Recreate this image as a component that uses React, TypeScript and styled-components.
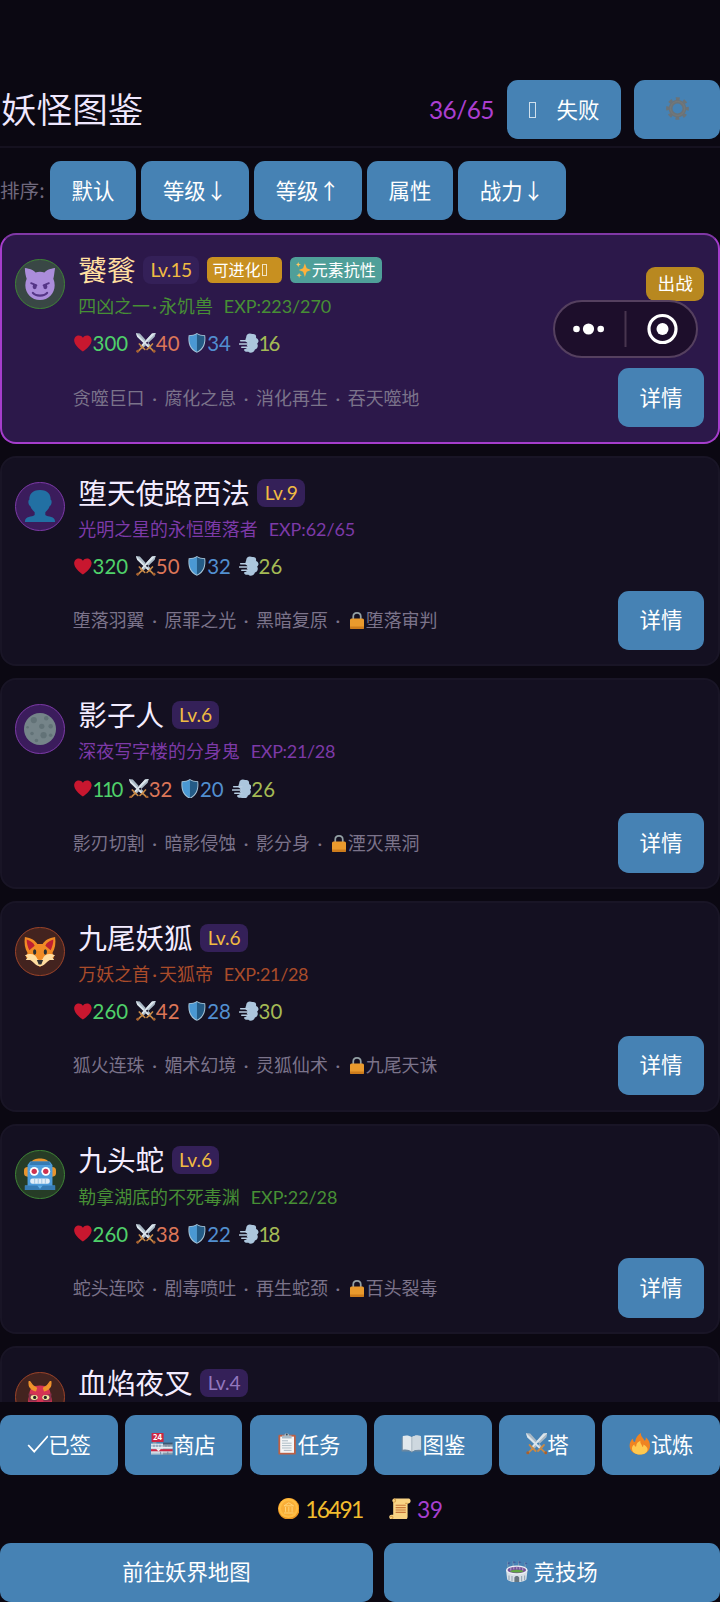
import React from 'react';
import styled, { createGlobalStyle, css } from 'styled-components';

const GlobalStyle = createGlobalStyle`
  * { box-sizing: border-box; }
  body { margin: 0; background: #0b0812; }
  button { font: inherit; }
`;

const Screen = styled.div`
  position: relative;
  width: 720px;
  height: 1602px;
  overflow: hidden;
  display: flex;
  flex-direction: column;
  background: #0b0812;
  color: #f0e8ff;
  font-family: Lato, 'Noto Sans CJK SC', sans-serif;
  font-size: 21.6px;
  font-weight: 400;
  white-space: nowrap;
`;

const Header = styled.header`
  flex: none;
  display: flex;
  align-items: center;
  margin-top: 80.4px;
  height: 67.6px;
  padding-bottom: 7px;
  border-bottom: 2px solid #15111f;
`;

const Title = styled.h1`
  margin: 0;
  flex: 1;
  padding: 0 0 3px 1px;
  font-family: 'Noto Sans CJK SC', sans-serif;
  font-size: 35.6px;
  font-weight: 350;
  line-height: 56px;
`;

const Count = styled.span`
  margin-right: 13px;
  font-size: 24.4px;
  letter-spacing: -0.5px;
  color: #ab3fd0;
`;

const Button = styled.button<{ $grow?: boolean; $gap?: number }>`
  flex: ${(p) => (p.$grow ? '1 0 auto' : 'none')};
  display: flex;
  align-items: center;
  justify-content: center;
  gap: ${(p) => p.$gap ?? 0}px;
  height: 59.4px;
  padding: 0 21.6px 2px;
  border: 0;
  border-radius: 10.8px;
  background: #4682b4;
  color: #fff;
  font-family: 'Noto Sans CJK SC', sans-serif;
  font-size: 21.4px;
  line-height: 30px;
`;

const HeaderButton = styled(Button)<{ $width: number }>`
  width: ${(p) => p.$width}px;
  padding: 0 0 2px;
  margin-right: ${(p) => (p.$width > 100 ? 13 : 0)}px;
`;

const MissingGlyph = styled.span<{ $small?: boolean }>`
  display: inline-block;
  border: 1px solid rgba(255, 255, 255, 0.75);
  width: ${(p) => (p.$small ? 5 : 7)}px;
  height: ${(p) => (p.$small ? 12 : 16)}px;
  margin-top: ${(p) => (p.$small ? 0 : 2)}px;
  margin-left: ${(p) => (p.$small ? 1 : 0)}px;
  margin-right: ${(p) => (p.$small ? 9.5 : 0)}px;
`;

const SortBar = styled.nav`
  flex: none;
  display: flex;
  align-items: center;
  gap: 5.4px;
  margin-top: 13px;
`;

const SortLabel = styled.span`
  width: 44.6px;
  padding-bottom: 2px;
  font-family: 'Noto Sans CJK SC', sans-serif;
  font-size: 19.6px;
  color: #70697d;
`;

const List = styled.main`
  flex: 1;
  min-height: 0;
  overflow: hidden;
  margin-top: 12.8px;
  display: flex;
  flex-direction: column;
  gap: 12px;
`;

const Card = styled.article<{ $active?: boolean }>`
  position: relative;
  flex: none;
  display: flex;
  height: 210.6px;
  padding: 14px;
  border: 2px solid #191526;
  border-radius: 16px;
  background: #141021;
  ${(p) =>
    p.$active &&
    css`
      border-color: #8038a6 #a53dcc #a53dcc;
      background: #2c184a;
    `}
`;

const Avatar = styled.div<{ $ring: string; $fill: string }>`
  flex: none;
  display: flex;
  align-items: center;
  justify-content: center;
  width: 49.4px;
  height: 49.4px;
  margin: 10px 0 0 -0.6px;
  border: 1.8px solid ${(p) => p.$ring};
  border-radius: 50%;
  background: ${(p) => p.$fill};
`;

const Body = styled.div`
  flex: 1;
  margin-left: 8px;
`;

const NameRow = styled.div`
  display: flex;
  align-items: center;
  gap: 7.6px;
  height: 32px;
  margin: 4.8px 0 0 5.5px;
`;

const Name = styled.h2<{ $gold?: boolean }>`
  margin: 0;
  font-size: 28.6px;
  font-weight: 400;
  line-height: 32px;
  color: ${(p) => (p.$gold ? '#ffdfa0' : '#f3ecff')};
`;

const Level = styled.span<{ $dim?: boolean; $track: number }>`
  height: 28px;
  padding: 0 7.4px;
  border-radius: 8px;
  background: #342058;
  color: ${(p) => (p.$dim ? '#9277be' : '#f0bb42')};
  font-size: 19.2px;
  line-height: 28px;
  letter-spacing: ${(p) => p.$track}px;
`;

const Tag = styled.span<{ $bg: string }>`
  display: flex;
  align-items: center;
  height: 26px;
  padding: 0 6px;
  border-radius: 5.4px;
  background: ${(p) => p.$bg};
  color: #fff;
  font-size: 16px;
  line-height: 26px;
`;

const Desc = styled.div<{ $color: string }>`
  height: 24px;
  margin: 8.2px 0 0 5.5px;
  color: ${(p) => p.$color};
  font-size: 17.95px;
  line-height: 24px;
`;

const Dot = styled.span<{ $wide?: boolean }>`
  display: inline-block;
  width: ${(p) => (p.$wide ? 19.9 : 9)}px;
  text-align: center;
`;

const Exp = styled.span<{ $ones: number }>`
  margin-left: 11px;
  letter-spacing: ${(p) => -0.05 - p.$ones * 0.25}px;
`;

const Stats = styled.div`
  display: flex;
  align-items: center;
  gap: 7.8px;
  height: 24px;
  margin-top: 13.2px;
`;

const Stat = styled.span<{ $color: string; $track: number }>`
  display: flex;
  align-items: center;
  color: ${(p) => p.$color};
  font-size: 20.4px;
  line-height: 24px;
  letter-spacing: ${(p) => p.$track}px;
`;

const SkillRow = styled.div`
  display: flex;
  align-items: center;
  justify-content: space-between;
  margin-top: 12.6px;
`;

const Skills = styled.div`
  display: flex;
  align-items: center;
  color: #7b738a;
  font-size: 17.95px;
  line-height: 24px;
`;

const Badge = styled.span`
  position: absolute;
  top: 32px;
  right: 14px;
  width: 57.6px;
  height: 34px;
  border-radius: 9px;
  background: #b88820;
  color: #fff;
  font-size: 17.6px;
  line-height: 33px;
  text-align: center;
`;

const Capsule = styled.div`
  position: absolute;
  top: 300px;
  left: 553px;
  width: 145px;
  height: 58px;
  display: flex;
  align-items: center;
  border: 2px solid #55405f;
  border-radius: 29px;
  background: #1d0e2b;
`;

const Footer = styled.footer`
  flex: none;
  padding-top: 13px;
`;

const Tabs = styled.div`
  display: flex;
  gap: 7.2px;
`;

const Wallet = styled.div`
  display: flex;
  align-items: center;
  justify-content: center;
  gap: 27px;
  height: 68px;
`;

const Money = styled.span<{ $color: string; $track: number }>`
  display: flex;
  align-items: center;
  gap: 6px;
  color: ${(p) => p.$color};
  font-size: 22.8px;
  letter-spacing: ${(p) => p.$track}px;
`;

const Actions = styled.div`
  display: flex;
  gap: 10.8px;
`;

const Art = styled.svg`
  display: block;
  flex: none;
`;

const drawings: Record<string, React.ReactNode> = {
  heart: (
    <path fill="#c8172f" d="M35 12.3C35 7 30.8 3 26 3c-3.3 0-6.200 1.600-8 4.100C16.200 4.600 13.300 3 10 3 5.200 3 1 7 1 12.300c0 8 9.500 17.500 17 21.700 7.500-4.200 17-13.700 17-21.700z" />
  ),
  swords: (
    <>
      <path d="M0 0l7 1 21 23-4 4L2 7zM36 0l-7 1L8 24l4 4L34 7z" fill="#a9b8c4" />
      <path d="M0 0l26 26-2 2L2 7zM36 0L10 26l-2-2L29 1z" fill="#dbe5ec" />
      <path d="M20 30l10-10M25 26l8 8M16 30L6 20M11 26l-8 8" stroke="#c88945" strokeWidth="3" strokeLinecap="round" />
      <circle cx="33" cy="33" r="2.500" fill="#a76030" />
      <circle cx="3" cy="33" r="2.500" fill="#a76030" />
    </>
  ),
  shield: (
    <>
      <path fill="#a8c5d8" d="M18 0c4 3 9 4 15 4 2 14-2 27-15 32C5 31 1 18 3 4c6 0 11-1 15-4z" />
      <path fill="#4a98d3" d="M18 2v32C7 29 3 18 4.500 5.500 10 5.500 15 4 18 2z" />
      <path fill="#245b86" d="M18 2v32c11-5 15-16 13.500-28.500C26 5.500 21 4 18 2z" />
    </>
  ),
  wind: (
    <>
      <path fill="#acc6dd" d="M13 8c0-6 6-9 11-6 5-1 8 2 7 7 5 2 6 7 2 10 3 5 0 10-4 11-2 6-9 8-12 4-4 1-8-1-8-4 3-1 6-2 7-5l-2-2c2-2 2-4 0-6-3-1-3-5-1-9z" />
      <path d="M3 14h15M1 20h16M5 26h13" stroke="#b6cce1" strokeWidth="2.600" strokeLinecap="round" />
    </>
  ),
  lock: (
    <>
      <path d="M10.500 18v-7c0-10 15-10 15 0v7" fill="none" stroke="#93a0a4" strokeWidth="3.500" />
      <rect x="4" y="15" width="28" height="21" rx="3" fill="#e99a2d" />
      <path d="M4 31h28v2a3 3 0 01-3 3H7a3 3 0 01-3-3z" fill="#cd7c1c" />
    </>
  ),
  sparkles: (
    <>
      <path d="M20 3l4 11 10 4-10 4-4 12-4-12-10-4 10-4z" fill="#ffb13b" />
      <path d="M5 0l1.500 4L11 6 6.500 7.500 5 12 3.500 7.500 0 6l3.500-2zM7 24l1.500 4 4.500 2-4.500 1.500L7 36l-1.500-4.500L1 30l4.500-2z" fill="#ffc860" />
    </>
  ),
  devil: (
    <>
      <path fill="#ab8ddb" d="M1 0c6 1 9 2 12 5a17 17 0 0110 0c3-3 6-4 12-5-1 5-1 9-2 12 5 12-3 24-15 24S-2 24 3 12C2 9 1 5 1 0z" />
      <g stroke="#553687" strokeLinecap="round" fill="none">
        <path d="M8 17l6 2.500M28 17l-6 2.500" strokeWidth="2" />
        <path d="M10 28c3 4 13 4 16 0" strokeWidth="2.500" />
      </g>
      <ellipse cx="12" cy="21" rx="2.300" ry="2.800" fill="#553687" />
      <ellipse cx="24" cy="21" rx="2.300" ry="2.800" fill="#553687" />
    </>
  ),
  bust: (
    <path fill="#2270a3" d="M18 0c9 0 12 5 12 11 2 1 1 6-1 7-1 3-3 5-5 7v3c3 3 11 0 11 8H1c0-8 8-5 11-8v-3c-2-2-4-4-5-7-2-1-3-6-1-7C6 5 9 0 18 0z" />
  ),
  moon: (
    <>
      <circle cx="18" cy="18" r="18" fill="#758489" />
      <g fill="#627277">
        <circle cx="11" cy="8" r="3.500" /><circle cx="25" cy="6" r="2.500" /><circle cx="20" cy="15" r="3" />
        <circle cx="30" cy="15" r="2.500" /><circle cx="9" cy="23" r="2" /><circle cx="22" cy="25" r="3.500" />
        <circle cx="30" cy="25" r="2" /><circle cx="14" cy="31" r="2" /><circle cx="4" cy="16" r="1.500" />
      </g>
    </>
  ),
  fox: (
    <>
      <path fill="#f18b25" d="M1 1c7 1 12 4 14 8h6c2-4 7-7 14-8 1 7 0 13-3 18l2 5-9 5-7 6-7-6-9-5 2-5C1 14 0 8 1 1z" />
      <path fill="#bd2032" d="M3 4c5 2 8 4 9 7l-6 5C4 12 3 8 3 4zM33 4c-5 2-8 4-9 7l6 5c2-4 3-8 3-12z" />
      <path fill="#ffdda0" d="M1 22c6-3 12-2 14 4l3 2 3-2c2-6 8-7 14-4l-3 2 2 3h-5c-4 2-6 7-11 7s-7-5-11-7H2l2-3z" />
      <ellipse cx="12" cy="18" rx="1.800" ry="3" fill="#292f33" />
      <ellipse cx="24" cy="18" rx="1.800" ry="3" fill="#292f33" />
      <path d="M14.500 27h7l-2 5h-3z" fill="#333" />
    </>
  ),
  robot: (
    <>
      <path d="M8 5c2-6 18-6 20 0z" fill="#e9952d" />
      <rect x="0" y="10" width="36" height="11" rx="4" fill="#e9952d" />
      <path d="M7 4h22l3 4v23h3v5H1v-5h3V8z" fill="#4f9ddb" />
      <path d="M8 4h20l2 4H6zM1 31h34v5H1z" fill="#367bb3" />
      <path d="M15 31h6l-3 4z" fill="#5dade6" />
      <circle cx="11.500" cy="15" r="5" fill="#fff" /><circle cx="24.500" cy="15" r="5" fill="#fff" />
      <circle cx="11.500" cy="15" r="3" fill="#cc3350" /><circle cx="24.500" cy="15" r="3" fill="#cc3350" />
      <rect x="7" y="23" width="22" height="6" rx="2.500" fill="#e3eff8" />
      <path d="M12 23v6M16 23v6M20 23v6M24 23v6" stroke="#9cc4e2" strokeWidth="1" />
    </>
  ),
  ogre: (
    <>
      <path d="M6 16c0-8 4-11 12-11s12 3 12 11c4 11-1 20-12 20S2 27 6 16z" fill="#d43354" />
      <path d="M13 11C7 10 5 5 6 0c2 4 4 6 8 8zM23 11c6-1 8-6 7-11-2 4-4 6-8 8z" fill="#f0932b" stroke="#f0932b" strokeWidth="1.500" strokeLinejoin="round" />
      <path d="M5 14l11 3-2 6H6zM31 14l-11 3 2 6h8z" fill="#87314d" />
      <ellipse cx="11.500" cy="18.500" rx="4" ry="2.800" fill="#f5e8a0" /><ellipse cx="24.500" cy="18.500" rx="4" ry="2.800" fill="#f5e8a0" />
      <circle cx="12" cy="18.500" r="1.800" fill="#222" /><circle cx="24" cy="18.500" r="1.800" fill="#222" />
      <path d="M10 30h16v3H10z" fill="#fff" />
    </>
  ),
  shop: (
    <>
      <path d="M3 14h6v5H3z" fill="#8295a4" />
      <rect x="1" y="0" width="20" height="15" rx="1" fill="#cb2744" />
      <text x="11" y="12" fontSize="13" fontWeight="700" textAnchor="middle" fill="#fff">24</text>
      <path d="M0 18h20v18H0z" fill="#b6c7d5" />
      <path d="M20 17h16v19H20z" fill="#8c9cab" />
      <path d="M0 27h36v4H0z" fill="#cb2744" />
      <path d="M20 16h16v3H20z" fill="#3a5874" />
      <path d="M0 18h20v1.500H0zM0 23h36v3H0zM0 31h36v1.500H0z" fill="#e6eef4" />
      <path d="M5 19.500v4M10 19.500v4M15 19.500v4M25 19v4M30 19v4M16 31v5M28 31v5" stroke="#6f86a0" strokeWidth="1.500" />
      <path d="M8 26h9l-4.500 5z" fill="#eee" />
    </>
  ),
  clipboard: (
    <>
      <rect x="4" y="3" width="29" height="33" rx="2" fill="#bd6045" />
      <rect x="7" y="6" width="23" height="27" fill="#f4f6f7" />
      <path d="M10 4h4c0-5 8-5 8 0h4v5H10z" fill="#a9bac6" />
      <circle cx="18" cy="2.500" r="1.600" fill="#364a5a" />
      <path d="M10 13h10M10 17h16M10 21h16M10 25h16M13 29h13" stroke="#a5b4c0" strokeWidth="1.500" />
    </>
  ),
  book: (
    <>
      <path d="M1 8l3-2h28l3 2v23H21l-3 2-3-2H1z" fill="#6a87a0" />
      <path d="M3 5c6-2 11-1 15 2 4-3 9-4 15-2v23c-6-1-11 0-15 3-4-3-9-4-15-3z" fill="#e1e8ed" />
      <path d="M18 7c4-3 9-4 15-2v23c-6-1-11 0-15 3z" fill="#ced8df" />
      <path d="M18 7v24" stroke="#8798a5" strokeWidth="1" />
    </>
  ),
  fire: (
    <>
      <path d="M18 36C8 36 1 30 1 21 1 15 4 11 7 9c-1 4 1 6 3 6C11 8 15 3 20 0c-1 6 4 8 6 13 2-1 2-3 2-6 5 4 7 9 7 14 0 9-7 15-17 15z" fill="#ef8322" />
      <path d="M18 36c-8 0-13-4-13-10 0-3 1-6 4-7 0 3 2 4 3 3 0-5 3-7 7-9-1 5 3 6 3 10 2 0 2-2 2-4 4 2 7 5 7 8 0 6-6 9-13 9z" fill="#ffc94f" />
    </>
  ),
  coin: (
    <>
      <circle cx="18" cy="18" r="18" fill="#e89422" />
      <circle cx="17.500" cy="17" r="16.500" fill="#ffbd43" />
      <circle cx="17.500" cy="17" r="12.500" fill="#f9ae38" />
      <path d="M10 13l8-5 8 5zM10 25h16M12.500 15v8M18 15v8M23.500 15v8" stroke="#ffd377" strokeWidth="1.600" fill="none" />
    </>
  ),
  scroll: (
    <>
      <path d="M9 1h24c4 1 4 7 0 8h-2v22c0 4-2 5-5 5H5c-6 0-6-8-1-8h3V7c-3-2-1-6 2-6z" fill="#f9d384" />
      <path d="M7 7c5 1 5-6 1-5M31 9h-4M2 31c5-2 6 3 2 4" fill="none" stroke="#d9a450" strokeWidth="2" />
      <path d="M11 12h17M11 16h17M11 20h17M11 24h17" stroke="#c8773c" strokeWidth="1.800" />
    </>
  ),
  stadium: (
    <>
      <path d="M3 1v10M12 0v8M21 0v8M32 2v9" stroke="#9aa7b5" strokeWidth="1.200" />
      <path d="M3 2l5 1-5 3zM12 0l5 2-5 2zM21 0l5 2-5 2zM32 2l4 2-4 2z" fill="#425c9c" />
      <path d="M0 15h36l-2 16c-5 6-27 6-32 0z" fill="#d7dfe6" />
      <ellipse cx="18" cy="15" rx="18" ry="7.500" fill="#eef2f5" />
      <ellipse cx="18" cy="15" rx="15.500" ry="5.500" fill="#77539a" />
      <path d="M8 11v5M13 10v4M18 10v4M23 10v4M28 11v5" stroke="#cfc2dd" strokeWidth="1.200" />
      <ellipse cx="18" cy="17" rx="11" ry="2.300" fill="#62a841" />
      <path d="M5 24v8M10 25v9M26 25v9M31 24v8" stroke="#9babb9" strokeWidth="2" />
      <path d="M14 36v-8c1-4 7-4 8 0v8z" fill="#66757f" />
    </>
  ),
  check: <path d="M2 20l10 11L35 5" fill="none" stroke="#fff" strokeWidth="3" />,
  gear: (
    <g fill="none" stroke="#6b7378">
      <circle cx="18" cy="18" r="15.500" strokeWidth="4.500" strokeDasharray="6.087 6.087" strokeDashoffset="3.040" />
      <circle cx="18" cy="18" r="10.800" strokeWidth="6" />
      <circle cx="18" cy="18" r="11" strokeWidth="0.800" stroke="#7f7f7a" />
    </g>
  ),
};

const Icon = ({ name, size, width }: { name: string; size: number; width?: number }) => (
  <Art width={width ?? size} height={size} viewBox="0 0 36 36" aria-hidden="true">
    {drawings[name]}
  </Art>
);

type Monster = {
  name: string;
  level: number;
  art: string;
  title: string;
  exp: string;
  color: string;
  ring: string;
  fill: string;
  stats: number[];
  skills: string[];
  locked?: boolean;
  active?: boolean;
};

const purple = { color: '#7d3aa8', ring: '#7d3aa8', fill: '#3b1c5c' };
const green = { color: '#478f35', ring: '#3f8536', fill: '#263c26' };
const orange = { color: '#aa4c2a', ring: '#9d4429', fill: '#43231f' };

const monsters: Monster[] = [
  { name: '饕餮', level: 15, art: 'devil', title: '四凶之一·永饥兽', exp: '223/270', ...green, fill: '#394745', stats: [300, 40, 34, 16], skills: ['贪噬巨口', '腐化之息', '消化再生', '吞天噬地'], active: true },
  { name: '堕天使路西法', level: 9, art: 'bust', title: '光明之星的永恒堕落者', exp: '62/65', ...purple, stats: [320, 50, 32, 26], skills: ['堕落羽翼', '原罪之光', '黑暗复原', '堕落审判'], locked: true },
  { name: '影子人', level: 6, art: 'moon', title: '深夜写字楼的分身鬼', exp: '21/28', ...purple, stats: [110, 32, 20, 26], skills: ['影刃切割', '暗影侵蚀', '影分身', '湮灭黑洞'], locked: true },
  { name: '九尾妖狐', level: 6, art: 'fox', title: '万妖之首·天狐帝', exp: '21/28', ...orange, stats: [260, 42, 28, 30], skills: ['狐火连珠', '媚术幻境', '灵狐仙术', '九尾天诛'], locked: true },
  { name: '九头蛇', level: 6, art: 'robot', title: '勒拿湖底的不死毒渊', exp: '22/28', ...green, stats: [260, 38, 22, 18], skills: ['蛇头连咬', '剧毒喷吐', '再生蛇颈', '百头裂毒'], locked: true },
  { name: '血焰夜叉', level: 4, art: 'ogre', title: '', exp: '', ...orange, stats: [], skills: [] },
];

const statKinds = [
  { icon: 'heart', color: '#4fd06a' },
  { icon: 'swords', color: '#dc7658' },
  { icon: 'shield', color: '#528fd0' },
  { icon: 'wind', color: '#a4ba55' },
];

const ones = (text: string) => text.split('1').length - 1;

// The digit 1 is set tighter than the others.
const tracking = (value: number) => {
  const text = String(value);
  return 0.05 - (ones(text) * 3.6) / text.length;
};

const MonsterCard = ({ m }: { m: Monster }) => (
  <Card $active={m.active}>
    <Avatar $ring={m.ring} $fill={m.fill}>
      <Icon name={m.art} size={32} />
    </Avatar>
    <Body>
      <NameRow>
        <Name $gold={m.active}>{m.name}</Name>
        <Level $dim={m.level < 5} $track={m.level > 9 ? -0.6 : 0}>Lv.{m.level}</Level>
        {m.active && (
          <>
            <Tag $bg="#c89020">可进化<MissingGlyph $small /></Tag>
            <Tag $bg="#4f9f99"><Icon name="sparkles" size={16} />元素抗性</Tag>
          </>
        )}
      </NameRow>
      {m.title && (
        <>
          <Desc $color={m.color}>
            {m.title.split('·').map((part, i) => (
              <React.Fragment key={part}>{i > 0 && <Dot>·</Dot>}{part}</React.Fragment>
            ))}
            <Exp $ones={ones(m.exp)}>EXP:{m.exp}</Exp>
          </Desc>
          <Stats>
            {m.stats.map((value, i) => (
              <Stat key={i} $color={statKinds[i].color} $track={tracking(value)}>
                <Icon name={statKinds[i].icon} size={i === 0 ? 18.5 : 19.8} width={19.8} />
                {value}
              </Stat>
            ))}
          </Stats>
          <SkillRow>
            <Skills>
              {m.skills.map((skill, i) => (
                <React.Fragment key={skill}>
                  {i > 0 && <Dot $wide>·</Dot>}
                  {m.locked && i === 3 && <Icon name="lock" size={18} />}
                  {skill}
                </React.Fragment>
              ))}
            </Skills>
            <Button>详情</Button>
          </SkillRow>
        </>
      )}
    </Body>
    {m.active && <Badge>出战</Badge>}
  </Card>
);

const tabs = [
  ['check', '已签'],
  ['shop', '商店'],
  ['clipboard', '任务'],
  ['book', '图鉴'],
  ['swords', '塔'],
  ['fire', '试炼'],
];

export default function App() {
  return (
    <Screen>
      <GlobalStyle />
      <Header>
        <Title>妖怪图鉴</Title>
        <Count>36/65</Count>
        <HeaderButton $width={114} $gap={21}><MissingGlyph />失败</HeaderButton>
        <HeaderButton $width={86}><Icon name="gear" size={23} /></HeaderButton>
      </Header>
      <SortBar>
        <SortLabel>排序:</SortLabel>
        {['默认', '等级↓', '等级↑', '属性', '战力↓'].map((label) => (
          <Button key={label}>{label}</Button>
        ))}
      </SortBar>
      <List>
        {monsters.map((m) => <MonsterCard key={m.name} m={m} />)}
      </List>
      <Footer>
        <Tabs>
          {tabs.map(([icon, label]) => (
            <Button key={label} $grow><Icon name={icon} size={21.6} />{label}</Button>
          ))}
        </Tabs>
        <Wallet>
          <Money $color="#f2bd2e" $track={-1.8}><Icon name="coin" size={21.6} />16491</Money>
          <Money $color="#a73fcf" $track={-0.6}><Icon name="scroll" size={21.6} />39</Money>
        </Wallet>
        <Actions>
          <Button $grow>前往妖界地图</Button>
          <Button $grow $gap={6}><Icon name="stadium" size={21.6} />竞技场</Button>
        </Actions>
      </Footer>
      <Capsule>
        <Art width="141" height="54" viewBox="0 0 141 54" aria-hidden="true">
          <g fill="#fff">
            <circle cx="21.500" cy="27" r="3.300" />
            <circle cx="33.500" cy="27" r="5.600" />
            <circle cx="45.700" cy="27" r="3.300" />
            <circle cx="107.500" cy="27" r="6" />
          </g>
          <path d="M70.500 9v36" stroke="#48354f" strokeWidth="2" />
          <circle cx="107.500" cy="27" r="13.500" fill="none" stroke="#fff" strokeWidth="3.200" />
        </Art>
      </Capsule>
    </Screen>
  );
}
